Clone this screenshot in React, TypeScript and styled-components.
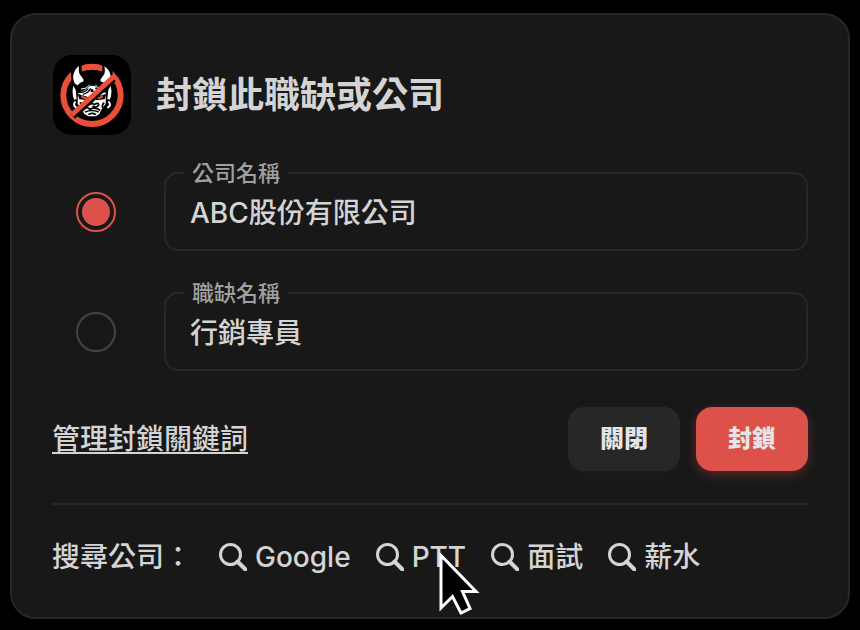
import React, { useState } from "react";
import styled, { createGlobalStyle } from "styled-components";

const GlobalStyle = createGlobalStyle`
  *, *::before, *::after { box-sizing: border-box; }
  body {
    margin: 0;
    background: #000;
    color: #d4d4d4;
    font-family: Inter, "Noto Sans CJK TC", sans-serif;
    font-size: 28px;
    line-height: 40px;
    font-weight: 500;
  }
  button, input { font: inherit; color: inherit; }
`;

const Page = styled.main`
  padding: 13px 10px 11px;
`;

const Card = styled.form`
  padding: 40px;
  border: 2px solid #272727;
  border-radius: 26px;
  background: #181818;
`;

const Header = styled.header`
  display: flex;
  align-items: center;
  gap: 24px;
`;

const Title = styled.h1`
  margin: 0;
  font-size: 36px;
  line-height: 48px;
  font-weight: 700;
`;

const Options = styled.div`
  display: grid;
  gap: 31px;
  margin: 27px 0 36px;
`;

const OptionRow = styled.div`
  display: flex;
  align-items: center;
  gap: 48px;
  padding-left: 24px;
`;

const Radio = styled.input`
  appearance: none;
  flex: none;
  width: 40px;
  height: 40px;
  margin: 10px 0 0;
  padding: 4px;
  border: 2px solid #444;
  border-radius: 50%;
  &:checked {
    border-color: #dc524a;
    background: #dc524a content-box;
  }
`;

const Field = styled.fieldset`
  flex: 1;
  min-width: 0;
  margin: 0;
  padding: 0 18px 11px;
  border: 2px solid #272727;
  border-radius: 14px;
`;

const Legend = styled.legend`
  padding: 0 8px;
  color: #a0a0a0;
  font-size: 22px;
  line-height: 22px;
`;

const TextInput = styled.input`
  display: block;
  width: 100%;
  height: 54px;
  padding: 0 6px;
  border: 0;
  outline: 0;
  background: transparent;
`;

const Actions = styled.div`
  display: flex;
  align-items: center;
  gap: 16px;
`;

const ManageLink = styled.a`
  margin-right: auto;
  color: inherit;
  text-decoration: underline;
  text-decoration-thickness: 2px;
  text-underline-offset: 3px;
`;

const Button = styled.button<{ $primary?: boolean }>`
  height: 64px;
  padding: 0 32px;
  border: 0;
  border-radius: 16px;
  background: ${(p) => (p.$primary ? "#dc524a" : "#272727")};
  box-shadow: 0 4px 12px ${(p) => (p.$primary ? "rgba(220, 82, 74, 0.3)" : "rgba(39, 39, 39, 0.3)")};
  color: #e5e5e5;
  font-size: 24px;
  line-height: 32px;
  font-weight: 900;
`;

const SearchBar = styled.nav`
  display: flex;
  flex-wrap: wrap;
  gap: 0 25px;
  margin-top: 32px;
  padding-top: 32px;
  border-top: 2px solid #272727;
`;

const SearchLabel = styled.span`
  margin-right: 2px;
`;

const SearchLink = styled.a`
  position: relative;
  display: flex;
  align-items: center;
  gap: 8px;
  color: inherit;
  text-decoration: none;
`;

const Pointer = styled.svg`
  position: absolute;
  left: 60px;
  top: 13px;
  pointer-events: none;
`;

function Logo() {
  return (
    <svg width="80" height="80" viewBox="24 27 240 240" aria-hidden="true">
      <rect x="27" y="27" width="234" height="240" rx="57" fill="#000" />
      <circle cx="144" cy="148" r="86" fill="none" stroke="#ea4f3a" strokeWidth="18" />
      <path d="M113 48 103 50 80 74 84 116 144 108 204 116 206 78 184 50 175 48 175 77Q144 67 113 77Z" fill="#000" />
      <path d="M105 60C92 70 86 84 88 100Q91 116 101 118Q108 109 119 106Q119 98 111 90Q102 81 105 60Z" fill="#fff" />
      <path d="M181 61C195 70 202 85 200 100Q196 114 186 116Q181 109 169 106Q169 98 177 90Q186 81 181 61Z" fill="#fff" />
      <path d="M88 119Q84 132 87 151L91 161 98 159 95 132ZM200 119Q204 132 201 151L197 161 190 159 193 132Z" fill="#fff" />
      <path d="M93 168Q86 178 96 184M195 168Q202 178 192 184" fill="none" stroke="#fff" strokeWidth="6" strokeLinecap="round" />
      <path d="M102 141Q114 137 124 131L139 119 153 120 164 131Q175 136 186 141L185 174 175 186 166 204 155 211 133 211 120 203 113 186 101 174Z" fill="#fff" />
      <path d="M111 129Q127 130 137 117M121 136Q134 133 141 122M154 117Q161 127 177 132" stroke="#fff" strokeWidth="3" fill="none" />
      <path d="M103 140Q122 141 133 128M117 145Q133 142 140 127M154 126Q165 136 181 138" stroke="#000" strokeWidth="4" fill="none" />
      <circle cx="144" cy="134" r="5" />
      <path d="M101 143 134 154 131 163 106 160ZM187 143 154 154 157 163 182 160Z" />
      <path d="M110 148 130 155 126 160 113 156ZM178 148 158 155 162 160 175 156Z" fill="#ea4f3a" />
      <path d="M107 170Q117 173 114 184M181 170Q174 173 175 185M129 169 121 182M135 177Q144 169 151 176Q164 167 164 178Q158 186 145 181M120 190Q129 180 137 190Q152 181 169 193M123 198Q143 189 164 198M133 206Q144 198 156 206" stroke="#000" strokeWidth="5" fill="none" />
      <path d="M87 212 209 99" stroke="#000" strokeWidth="18" />
      <path d="M83 207 210 91" stroke="#ea4f3a" strokeWidth="15" />
    </svg>
  );
}

function SearchIcon() {
  return (
    <svg width="28" height="28" viewBox="0 0 28 28" fill="none" stroke="currentColor" strokeWidth="3" aria-hidden="true">
      <circle cx="11.5" cy="11.5" r="10" />
      <path d="m18.5 18.5 8 8" strokeWidth="4" strokeLinecap="round" />
    </svg>
  );
}

const fields = [
  { id: "company", label: "公司名稱", value: "ABC股份有限公司" },
  { id: "job", label: "職缺名稱", value: "行銷專員" },
];

const searches = ["Google", "PTT", "面試", "薪水"];

export default function App() {
  const [target, setTarget] = useState("company");

  return (
    <Page>
      <GlobalStyle />
      <Card onSubmit={(e: React.FormEvent) => e.preventDefault()}>
        <Header>
          <Logo />
          <Title>封鎖此職缺或公司</Title>
        </Header>
        <Options>
          {fields.map((field) => (
            <OptionRow key={field.id}>
              <Radio
                type="radio"
                name="target"
                aria-label={field.label}
                checked={target === field.id}
                onChange={() => setTarget(field.id)}
              />
              <Field>
                <Legend>
                  <label htmlFor={field.id}>{field.label}</label>
                </Legend>
                <TextInput id={field.id} type="text" defaultValue={field.value} />
              </Field>
            </OptionRow>
          ))}
        </Options>
        <Actions>
          <ManageLink href="#keywords">管理封鎖關鍵詞</ManageLink>
          <Button type="button">關閉</Button>
          <Button type="submit" $primary>封鎖</Button>
        </Actions>
        <SearchBar>
          <SearchLabel>搜尋公司：</SearchLabel>
          {searches.map((name) => (
            <SearchLink key={name} href="#search">
              <SearchIcon />
              {name}
              {name === "PTT" && (
                <Pointer width="46" height="68" viewBox="0 0 46 68" aria-hidden="true">
                  <path d="M5 5.500V58L16.500 46.500 25 63 34 58.500 26.500 41.500H40Z" fill="#000" stroke="#fff" strokeWidth="3" />
                </Pointer>
              )}
            </SearchLink>
          ))}
        </SearchBar>
      </Card>
    </Page>
  );
}
